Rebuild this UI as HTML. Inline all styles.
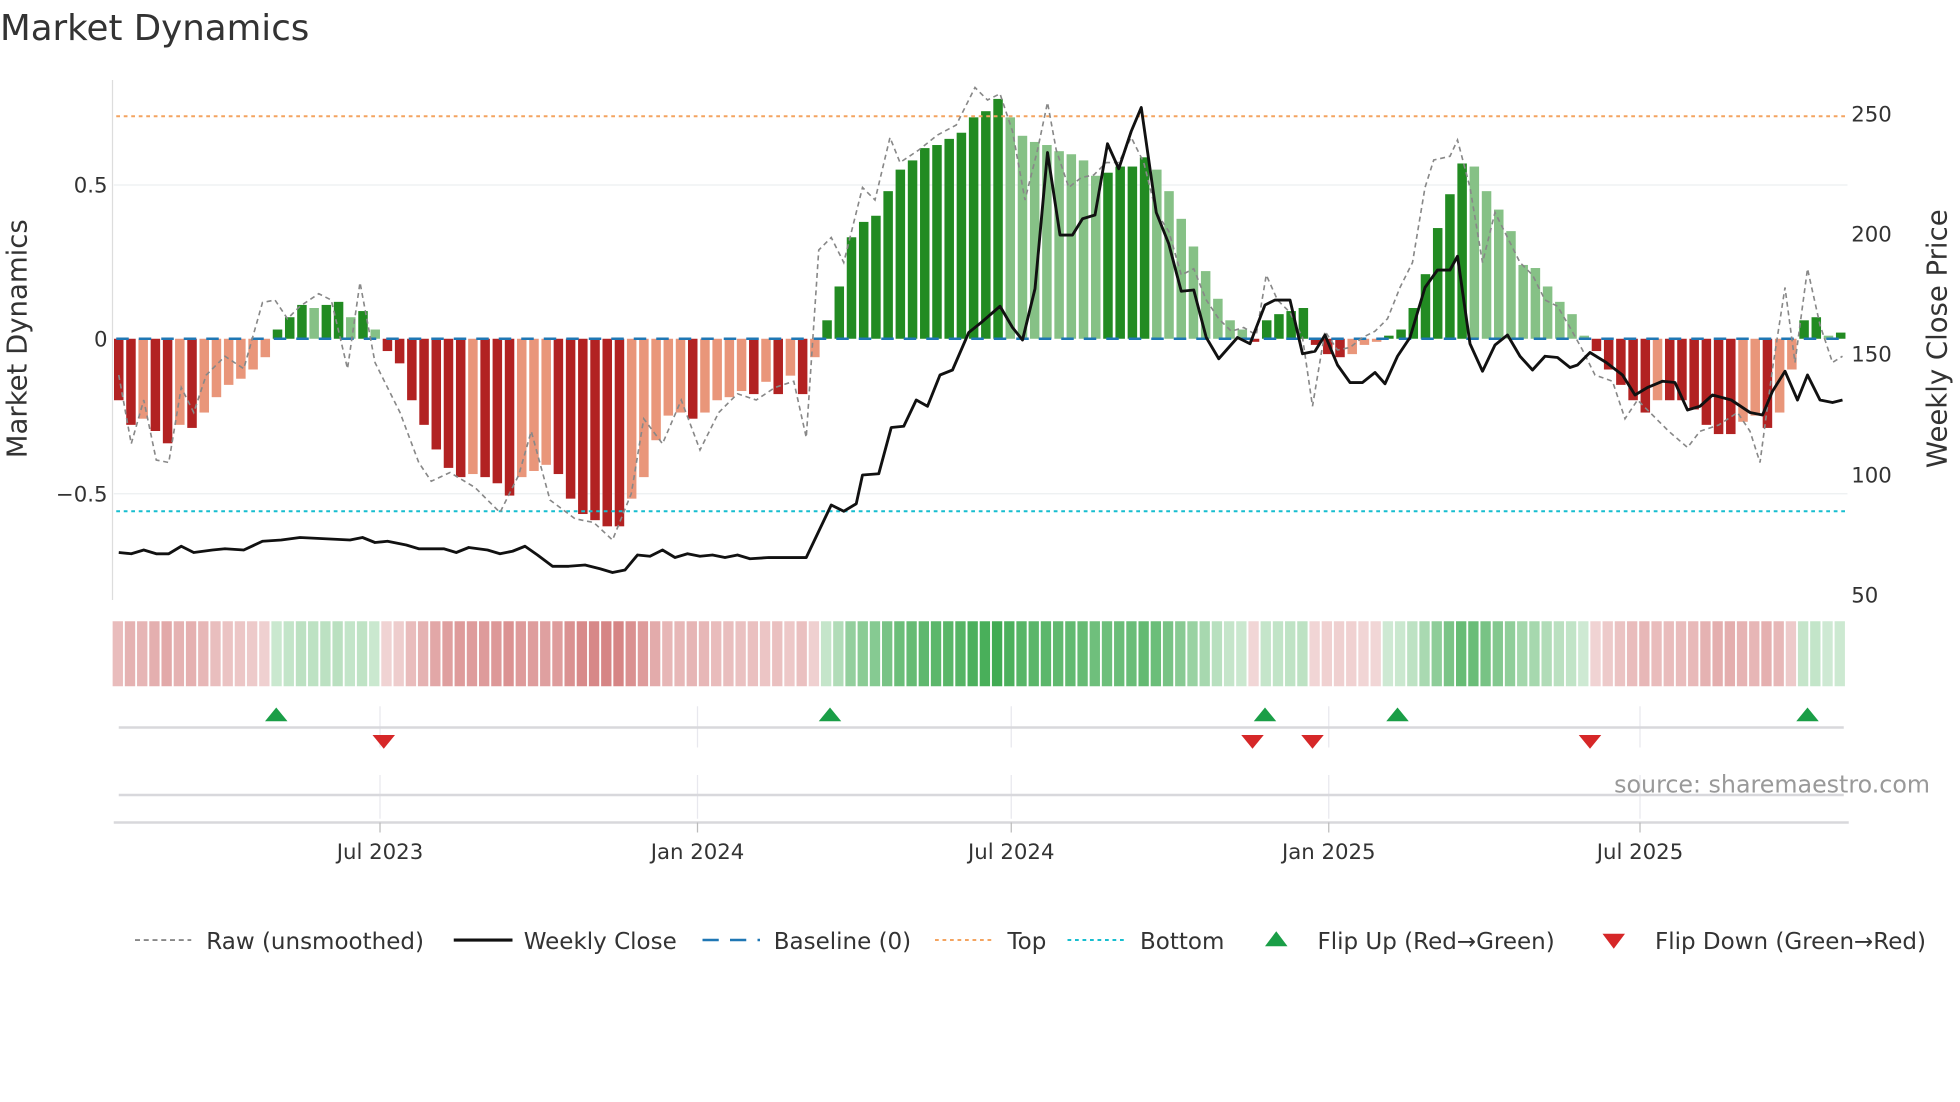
<!DOCTYPE html>
<html><head><meta charset="utf-8">
<style>
html,body{margin:0;padding:0;background:#fff;overflow:hidden}
#wrap{width:1568px;height:882px;transform:scale(1.25);transform-origin:0 0;position:relative}
svg text{font-family:"DejaVu Sans","Liberation Sans",sans-serif}
</style></head><body>
<div id="wrap">
<svg id="s" width="1568" height="882" viewBox="0 0 1568 882" xmlns="http://www.w3.org/2000/svg">
<text x="0" y="32" font-size="28.5" fill="#333">Market Dynamics</text>
<line x1="90" y1="64" x2="90" y2="480" stroke="#ddd"/>
<line x1="91" y1="148" x2="1478" y2="148" stroke="#eceff1"/>
<line x1="91" y1="395" x2="1478" y2="395" stroke="#eceff1"/>
<g font-size="17" fill="#333" text-anchor="end">
<text x="86" y="154">0.5</text><text x="86" y="277">0</text><text x="86" y="401">−0.5</text>
</g>
<g font-size="17" fill="#333">
<text x="1481" y="97">250</text><text x="1481" y="193">200</text><text x="1481" y="289">150</text><text x="1481" y="386">100</text><text x="1481" y="482">50</text>
</g>
<text transform="translate(21,271) rotate(-90)" font-size="22" fill="#333" text-anchor="middle">Market Dynamics</text>
<text transform="translate(1557,271) rotate(-90)" font-size="22" fill="#333" text-anchor="middle">Weekly Close Price</text>
<g id="bars"></g>
<g id="heat"></g>
<line x1="93" y1="93" x2="1476" y2="93" stroke="#f4a460" stroke-width="1.6" stroke-dasharray="3,3"/>
<line x1="93" y1="409" x2="1476" y2="409" stroke="#17becf" stroke-width="1.6" stroke-dasharray="3,3"/>
<line x1="93" y1="271" x2="1476" y2="271" stroke="#1f77b4" stroke-width="2" stroke-dasharray="10,8"/>
<polyline id="raw" fill="none" stroke="#888" stroke-width="1.3" stroke-dasharray="4,3"/>
<polyline id="px" fill="none" stroke="#111" stroke-width="2.3" stroke-linejoin="round"/>
<g stroke="#e8e8ee" stroke-width="1">
<line x1="304" y1="565" x2="304" y2="598"/><line x1="558" y1="565" x2="558" y2="598"/><line x1="809" y1="565" x2="809" y2="598"/><line x1="1063" y1="565" x2="1063" y2="598"/><line x1="1312" y1="565" x2="1312" y2="598"/>
<line x1="304" y1="620" x2="304" y2="655"/><line x1="558" y1="620" x2="558" y2="655"/><line x1="809" y1="620" x2="809" y2="655"/><line x1="1063" y1="620" x2="1063" y2="655"/><line x1="1312" y1="620" x2="1312" y2="655"/>
</g>
<line x1="95" y1="582" x2="1475" y2="582" stroke="#d8d8dc" stroke-width="2"/>
<line x1="95" y1="636" x2="1475" y2="636" stroke="#d8d8dc" stroke-width="2"/>
<line x1="91" y1="658" x2="1479" y2="658" stroke="#d8d8dc" stroke-width="2"/>
<g stroke="#bbb"><line x1="304" y1="658" x2="304" y2="666"/><line x1="558" y1="658" x2="558" y2="666"/><line x1="809" y1="658" x2="809" y2="666"/><line x1="1063" y1="658" x2="1063" y2="666"/><line x1="1312" y1="658" x2="1312" y2="666"/></g>
<g font-size="17" fill="#333" text-anchor="middle">
<text x="304" y="687">Jul 2023</text><text x="558" y="687">Jan 2024</text><text x="809" y="687">Jul 2024</text><text x="1063" y="687">Jan 2025</text><text x="1312" y="687">Jul 2025</text>
</g>
<g fill="#1a9e47">
<polygon points="212,577 230,577 221,566"/><polygon points="655,577 673,577 664,566"/><polygon points="1003,577 1021,577 1012,566"/><polygon points="1109,577 1127,577 1118,566"/><polygon points="1437,577 1455,577 1446,566"/>
</g>
<g fill="#d62728">
<polygon points="298,588 316,588 307,599"/><polygon points="993,588 1011,588 1002,599"/><polygon points="1041,588 1059,588 1050,599"/><polygon points="1263,588 1281,588 1272,599"/>
</g>
<text x="1544" y="634" font-size="19" fill="#999" text-anchor="end">source: sharemaestro.com</text>
<g font-size="18.4" fill="#333">
<line x1="108" y1="752" x2="153" y2="752" stroke="#888" stroke-width="1.5" stroke-dasharray="4,3"/>
<text x="165" y="759">Raw (unsmoothed)</text>
<line x1="363" y1="752" x2="410" y2="752" stroke="#111" stroke-width="2.5"/>
<text x="419" y="759">Weekly Close</text>
<line x1="562" y1="752" x2="608" y2="752" stroke="#1f77b4" stroke-width="2" stroke-dasharray="13,9"/>
<text x="619" y="759">Baseline (0)</text>
<line x1="748" y1="752" x2="794" y2="752" stroke="#f4a460" stroke-width="1.6" stroke-dasharray="3,3"/>
<text x="806" y="759">Top</text>
<line x1="854" y1="752" x2="900" y2="752" stroke="#17becf" stroke-width="1.6" stroke-dasharray="3,3"/>
<text x="912" y="759">Bottom</text>
<polygon points="1012,757 1030,757 1021,745" fill="#1a9e47"/>
<text x="1054" y="759">Flip Up (Red→Green)</text>
<polygon points="1282,747 1300,747 1291,759" fill="#d62728"/>
<text x="1324" y="759">Flip Down (Green→Red)</text>
</g>
</svg>
</div>
<script>
var v=[-0.2,-0.28,-0.26,-0.3,-0.34,-0.28,-0.29,-0.24,-0.19,-0.15,-0.13,-0.1,-0.06,0.03,0.07,0.11,0.1,0.11,0.12,0.07,0.09,0.03,-0.04,-0.08,-0.2,-0.28,-0.36,-0.42,-0.45,-0.44,-0.45,-0.47,-0.51,-0.45,-0.43,-0.41,-0.44,-0.52,-0.57,-0.59,-0.61,-0.61,-0.52,-0.45,-0.33,-0.25,-0.24,-0.26,-0.24,-0.2,-0.19,-0.17,-0.18,-0.14,-0.18,-0.12,-0.18,-0.06,0.06,0.17,0.33,0.38,0.4,0.48,0.55,0.58,0.62,0.63,0.65,0.67,0.72,0.74,0.78,0.72,0.66,0.64,0.63,0.61,0.6,0.58,0.53,0.54,0.56,0.56,0.59,0.55,0.48,0.39,0.3,0.22,0.13,0.06,0.03,-0.01,0.06,0.08,0.09,0.1,-0.02,-0.05,-0.06,-0.05,-0.02,-0.01,0.01,0.03,0.1,0.21,0.36,0.47,0.57,0.56,0.48,0.42,0.35,0.24,0.23,0.17,0.12,0.08,0.01,-0.04,-0.1,-0.15,-0.2,-0.24,-0.2,-0.2,-0.2,-0.23,-0.28,-0.31,-0.31,-0.27,-0.25,-0.29,-0.24,-0.1,0.06,0.07,0.01,0.02];
var NS="http://www.w3.org/2000/svg",bars=document.getElementById('bars'),heat=document.getElementById('heat');
var x0=95,dx=9.77,z=271,k=246;
function el(t,a,p){var e=document.createElementNS(NS,t);for(var q in a)e.setAttribute(q,a[q]);p.appendChild(e);}
for(var i=0;i<v.length;i++){var x=x0+i*dx,val=v[i],p=i?v[i-1]:0;
var strong=Math.abs(val)>=Math.abs(p)||(val*p<0);
var c=val>=0?(strong?'#228b22':'#86c186'):(strong?'#b22222':'#e9967a');
var h=Math.abs(val)*k;el('rect',{x:x-3.8,y:val>=0?z-h:z,width:7.6,height:h,fill:c},bars);
var hc=val>=0?'rgba(40,160,60,'+(0.22+Math.abs(val)*0.85)+')':'rgba(190,60,60,'+(0.2+Math.abs(val)*0.7)+')';
el('rect',{x:x-4.9,y:497,width:dx-1.5,height:52,fill:hc},heat);}
var raw="95,300 105,355 115,320 125,368 135,370 145,310 155,330 165,300 180,285 195,295 210,242 220,240 230,255 240,245 255,235 265,240 278,295 288,226 300,290 320,330 335,370 345,385 360,378 380,390 400,410 415,380 425,345 440,400 460,415 475,418 490,432 505,395 515,335 530,355 545,320 560,360 575,330 590,315 605,320 620,310 635,305 645,350 655,200 665,190 675,210 690,150 700,160 712,110 720,130 735,120 750,108 765,100 780,70 790,80 800,75 810,105 820,160 830,120 838,82 845,120 855,150 865,142 875,140 885,130 895,130 905,110 915,130 925,170 935,185 945,220 955,215 965,240 975,255 985,265 995,262 1005,268 1013,220 1022,240 1032,250 1042,270 1050,325 1060,265 1070,280 1080,278 1090,270 1100,265 1110,255 1120,230 1130,210 1140,150 1147,128 1160,125 1166,112 1176,150 1186,210 1196,170 1206,190 1216,210 1226,220 1236,240 1246,245 1256,262 1266,280 1276,300 1290,305 1300,335 1310,320 1320,330 1335,345 1350,358 1360,345 1375,340 1390,330 1400,345 1408,370 1418,295 1428,230 1436,290 1446,215 1456,260 1466,290 1474,285";
document.getElementById('raw').setAttribute('points',raw);
var px="95,442 105,443 115,440 125,443 135,443 145,437 155,442 170,440 180,439 195,440 210,433 225,432 240,430 260,431 280,432 290,430 300,434 310,433 325,436 335,439 355,439 365,442 375,438 390,440 400,443 410,441 420,437 430,444 442,453 455,453 468,452 480,455 490,458 500,456 510,444 520,445 530,440 540,446 550,443 560,445 570,444 580,446 590,444 600,447 615,446 630,446 645,446 655,425 665,404 675,409 685,403 690,380 703,379 713,342 723,341 733,320 742,325 752,300 762,296 775,266 785,258 800,245 810,262 818,272 828,231 838,122 848,188 858,188 866,175 876,172 886,115 895,135 905,105 913,86 925,170 935,195 945,233 955,232 965,270 975,287 990,270 1000,275 1012,244 1020,240 1032,240 1042,283 1052,281 1060,268 1070,292 1080,306 1090,306 1100,298 1108,307 1118,285 1128,270 1140,230 1150,216 1160,216 1166,205 1176,275 1186,297 1196,276 1206,268 1216,285 1226,296 1236,285 1246,286 1256,294 1262,292 1272,282 1285,290 1298,300 1308,316 1318,310 1330,305 1340,306 1350,328 1360,325 1370,316 1385,320 1400,330 1410,332 1418,313 1428,297 1438,320 1446,300 1456,320 1466,322 1474,320";
document.getElementById('px').setAttribute('points',px);
</script>
</body></html>
